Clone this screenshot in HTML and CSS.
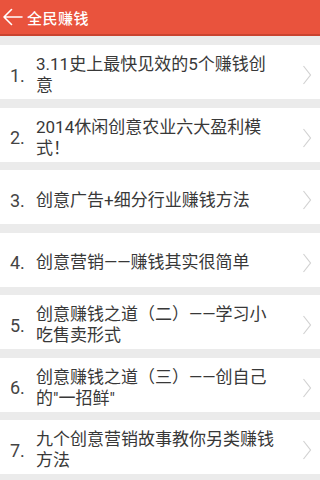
FILE: index.html
```html
<!DOCTYPE html>
<html lang="zh-CN">
<head>
<meta charset="utf-8">
<title>全民赚钱</title>
<link rel="stylesheet" href="styles.css">
</head>
<body>
<header class="bar">
  <svg class="back" width="20" height="18" viewBox="0 0 20 18"><path d="M1 9 H19 M8.5 1.5 L1 9 L8.5 16.5" fill="none" stroke="#fff" stroke-width="1.6" stroke-linecap="round" stroke-linejoin="round"/></svg>
  <span class="title">全民赚钱</span>
</header>
<ul class="list">
  <li class="item"><span class="num">1.</span><span class="text">3.11史上最快见效的5个赚钱创意</span><svg class="chev" width="10" height="20" viewBox="0 0 10 20"><path d="M1.5 1 L8.5 10 L1.5 19" fill="none" stroke="#d2d2d2" stroke-width="1.2"/></svg></li>
  <li class="item"><span class="num">2.</span><span class="text">2014休闲创意农业六大盈利模式！</span><svg class="chev" width="10" height="20" viewBox="0 0 10 20"><path d="M1.5 1 L8.5 10 L1.5 19" fill="none" stroke="#d2d2d2" stroke-width="1.2"/></svg></li>
  <li class="item"><span class="num">3.</span><span class="text">创意广告+细分行业赚钱方法</span><svg class="chev" width="10" height="20" viewBox="0 0 10 20"><path d="M1.5 1 L8.5 10 L1.5 19" fill="none" stroke="#d2d2d2" stroke-width="1.2"/></svg></li>
  <li class="item"><span class="num">4.</span><span class="text">创意营销——赚钱其实很简单</span><svg class="chev" width="10" height="20" viewBox="0 0 10 20"><path d="M1.5 1 L8.5 10 L1.5 19" fill="none" stroke="#d2d2d2" stroke-width="1.2"/></svg></li>
  <li class="item"><span class="num">5.</span><span class="text">创意赚钱之道（二）——学习小吃售卖形式</span><svg class="chev" width="10" height="20" viewBox="0 0 10 20"><path d="M1.5 1 L8.5 10 L1.5 19" fill="none" stroke="#d2d2d2" stroke-width="1.2"/></svg></li>
  <li class="item"><span class="num">6.</span><span class="text">创意赚钱之道（三）——创自己的"一招鲜"</span><svg class="chev" width="10" height="20" viewBox="0 0 10 20"><path d="M1.5 1 L8.5 10 L1.5 19" fill="none" stroke="#d2d2d2" stroke-width="1.2"/></svg></li>
  <li class="item"><span class="num">7.</span><span class="text">九个创意营销故事教你另类赚钱方法</span><svg class="chev" width="10" height="20" viewBox="0 0 10 20"><path d="M1.5 1 L8.5 10 L1.5 19" fill="none" stroke="#d2d2d2" stroke-width="1.2"/></svg></li>
</ul>
</body>
</html>
```
FILE: styles.css
```css
html, body {
  margin: 0;
  padding: 0;
}
body {
  width: 320px;
  height: 480px;
  overflow: hidden;
  background: #ebebeb;
  font-family: Roboto, "Noto Sans CJK SC", sans-serif;
}
.bar {
  height: 34px;
  background: #e9533d;
  border-bottom: 2px solid #c9432f;
  display: flex;
  align-items: center;
  padding-left: 3px;
  gap: 4px;
}
.back {
  display: block;
}
.title {
  color: #fff;
  font-family: "Noto Sans CJK SC", sans-serif;
  font-size: 15px;
  font-weight: 500;
  letter-spacing: 0.5px;
}
.list {
  list-style: none;
  margin: 0;
  padding: 9px 0 0 0;
  display: flex;
  flex-direction: column;
  gap: 8.5px;
}
.item {
  height: 54px;
  background: #fff;
  display: flex;
  align-items: center;
  box-sizing: border-box;
  padding: 6px 8px 0 10px;
}
.num {
  width: 26px;
  flex: none;
  font-size: 18px;
  color: #444;
}
.text {
  width: 240px;
  flex: none;
  font-size: 17px;
  line-height: 21px;
  color: #383838;
}
.chev {
  display: block;
  margin-left: auto;
  flex: none;
}
```
